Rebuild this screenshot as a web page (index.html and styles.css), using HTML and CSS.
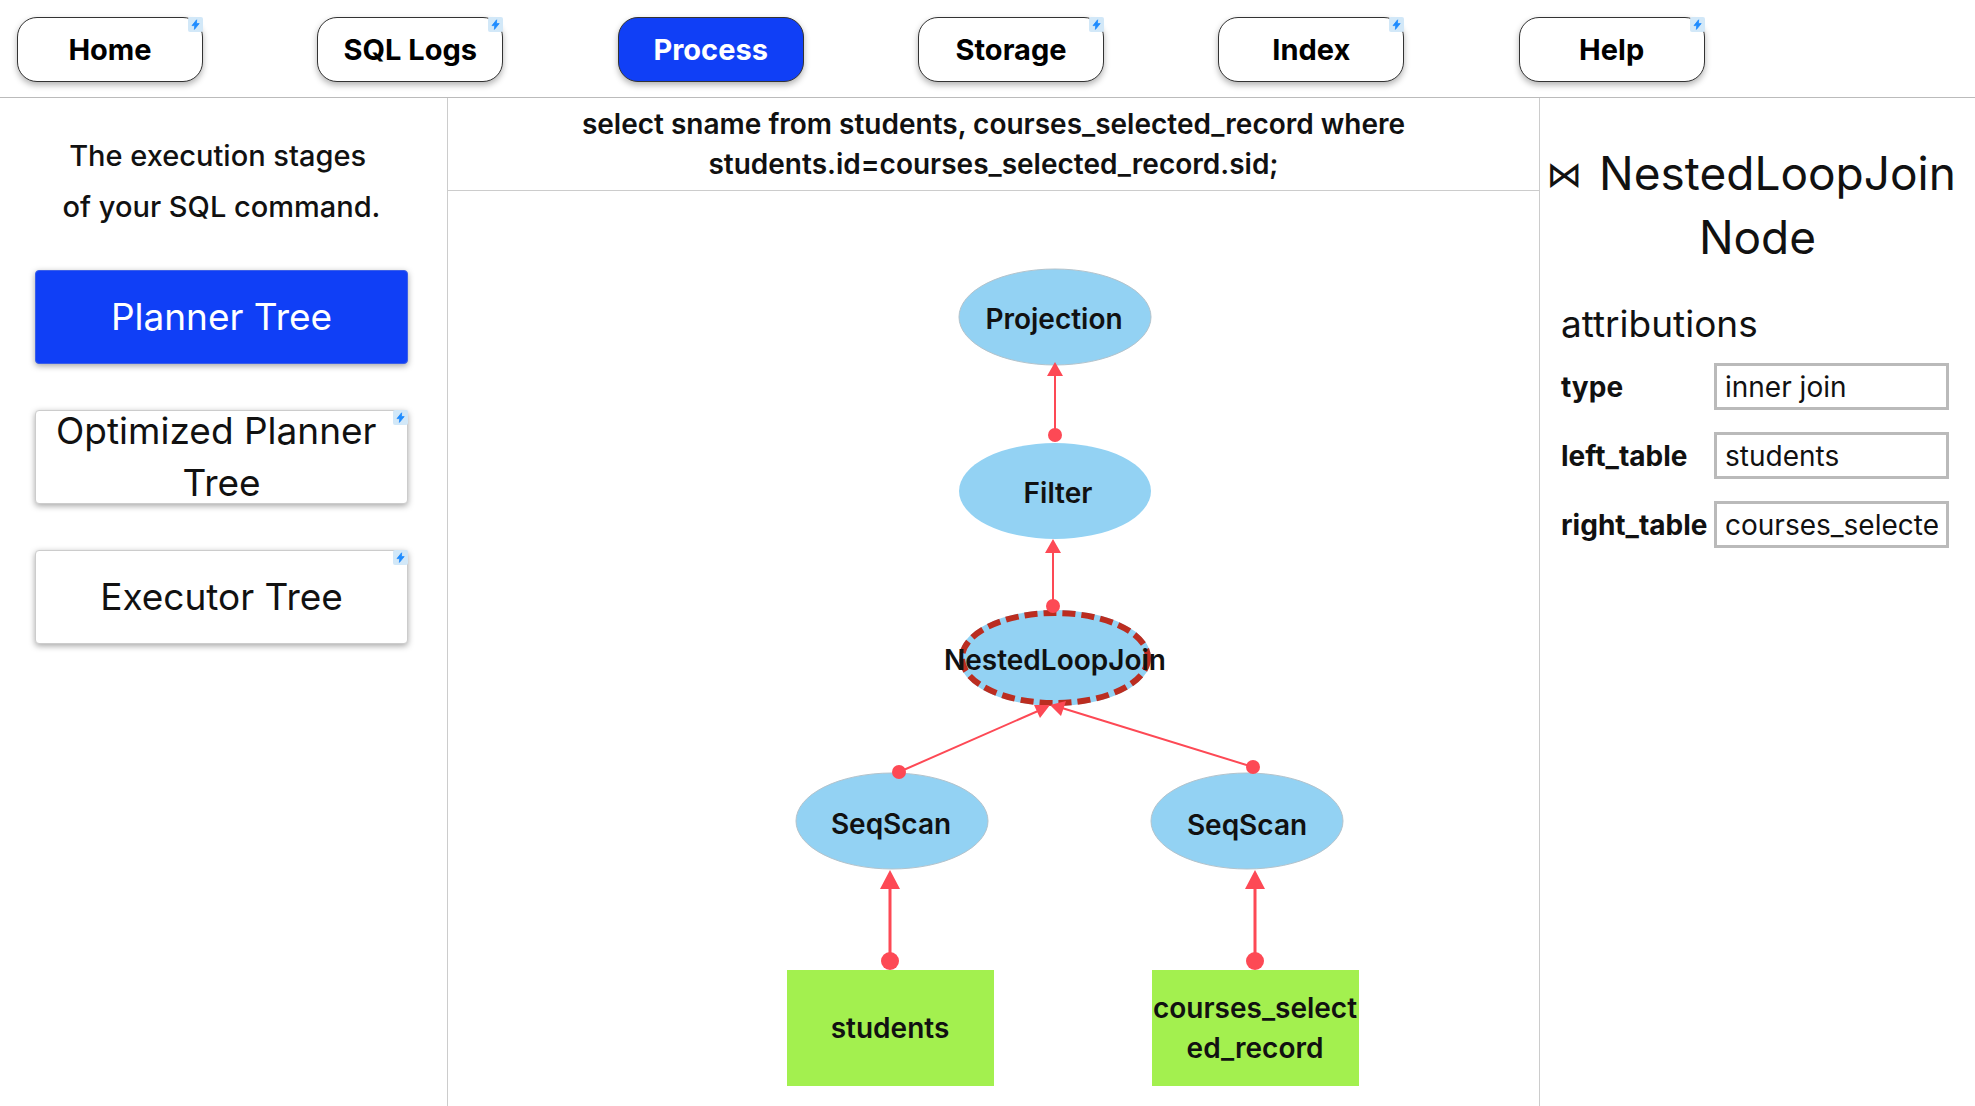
FILE: index.html
```html
<!DOCTYPE html>
<html lang="en">
<head>
<meta charset="utf-8">
<title>SQL Process</title>
<link rel="stylesheet" href="styles.css">
</head>
<body>
<svg class="defs" aria-hidden="true">
  <symbol id="bolt" viewBox="0 0 15 15"><path d="M8.6 2.8 4 8.6h2.7L6.4 12.4l4.8-5.8H8.5z" fill="#1e8cff" stroke="#1e8cff" stroke-width=".8"/></symbol>
</svg>
<nav class="nav">
  <button class="nav-btn">Home<svg class="badge"><use href="#bolt"/></svg></button>
  <button class="nav-btn">SQL Logs<svg class="badge"><use href="#bolt"/></svg></button>
  <button class="nav-btn active">Process</button>
  <button class="nav-btn">Storage<svg class="badge"><use href="#bolt"/></svg></button>
  <button class="nav-btn">Index<svg class="badge"><use href="#bolt"/></svg></button>
  <button class="nav-btn">Help<svg class="badge"><use href="#bolt"/></svg></button>
</nav>
<div class="layout">
  <aside class="stages">
    <p class="intro">The execution stages&nbsp;<br>of your SQL command.</p>
    <button class="stage active">Planner Tree</button>
    <button class="stage"><span>Optimized Planner&nbsp;<br>Tree</span><svg class="badge"><use href="#bolt"/></svg></button>
    <button class="stage">Executor Tree<svg class="badge"><use href="#bolt"/></svg></button>
  </aside>
  <main class="center">
    <p class="query">select sname from students, courses_selected_record where students.id=courses_selected_record.sid;</p>
    <svg class="tree" viewBox="448 191 1091 915" role="img" aria-label="Planner tree">
      <g class="node">
        <ellipse class="outlined" cx="1055" cy="317" rx="96" ry="48"/>
        <ellipse cx="1055" cy="491" rx="96" ry="48"/>
        <ellipse cx="1055" cy="658" rx="96" ry="48"/>
        <ellipse class="selected" cx="1055" cy="658" rx="93" ry="45"/>
        <ellipse class="outlined" cx="892" cy="821" rx="96" ry="48"/>
        <ellipse class="outlined" cx="1247" cy="821" rx="96" ry="48"/>
      </g>
      <g class="table">
        <rect x="787" y="970" width="207" height="116"/>
        <rect x="1152" y="970" width="207" height="116"/>
      </g>
      <g class="edge">
        <path d="M1055 434V374M1053 605V552M899 772 1038 711M1253 767 1062 708"/>
        <path class="thick" d="M890 960V886M1255 960V886"/>
        <circle cx="1055" cy="435" r="7"/>
        <circle cx="1053" cy="606" r="7"/>
        <circle cx="899" cy="772" r="7"/>
        <circle cx="1253" cy="767" r="7"/>
        <circle cx="890" cy="961" r="9"/>
        <circle cx="1255" cy="961" r="9"/>
        <path class="head" d="M1055 362l8 14h-16zM1053 539l8 14h-16zM1050 705 1034 705 1040 718zM1050 705 1066 701 1061 716zM890 870l10 19h-20zM1255 870l10 19h-20z"/>
      </g>
      <g class="label">
        <text x="1054" y="329">Projection</text>
        <text x="1058" y="503">Filter</text>
        <text x="1055" y="670">NestedLoopJoin</text>
        <text x="891" y="834">SeqScan</text>
        <text x="1247" y="835">SeqScan</text>
        <text x="890" y="1038">students</text>
        <text x="1255" y="1018">courses_select</text>
        <text x="1255" y="1058">ed_record</text>
      </g>
    </svg>
  </main>
  <aside class="details">
    <h1 class="title"><span class="join">⋈</span> NestedLoopJoin&nbsp;<br>Node</h1>
    <form class="attrs">
      <h2 class="subtitle">attributions</h2>
      <div class="field"><label for="type">type</label><input id="type" value="inner join"></div>
      <div class="field"><label for="left">left_table</label><input id="left" value="students"></div>
      <div class="field"><label for="right">right_table</label><input id="right" value="courses_selecte"></div>
    </form>
  </aside>
</div>
</body>
</html>
```
FILE: styles.css
```css
* { box-sizing: border-box; }
body {
  margin: 0;
  min-height: 100vh;
  display: flex;
  flex-direction: column;
  background: #fff;
  color: #111;
  font-family: Inter, "Liberation Sans", sans-serif;
  font-size: 28px;
  font-weight: 600;
}
button, input { font: inherit; color: inherit; }
h1, h2, p { margin: 0; font-weight: 400; }
.defs { position: absolute; width: 0; height: 0; }

.nav {
  display: grid;
  grid-template-columns: repeat(6, minmax(0, 1fr));
  padding: 17px 156px 15px 17px;
  border-bottom: 1px solid #bbb;
}
.nav-btn {
  position: relative;
  width: 186px;
  height: 65px;
  padding: 0;
  border: 1px solid #333;
  border-radius: 20px;
  background: #fff;
  color: #000;
  font-size: 29px;
  font-weight: 700;
  box-shadow: 0 3px 6px rgba(0, 0, 0, .3);
}
.nav-btn.active { background: #103ff6; color: #fff; }
.badge {
  position: absolute;
  top: -1px;
  right: -1px;
  width: 15px;
  height: 15px;
  border-radius: 2px;
  background: #d2e8f8;
}

.layout {
  flex: 1;
  display: grid;
  grid-template-columns: 448px minmax(0, 1fr) 436px;
}
.stages {
  display: flex;
  flex-direction: column;
  gap: 46px;
  padding: 32px 39px 32px 35px;
  border-right: 1px solid #ccc;
}
.intro {
  margin-bottom: -8px;
  font-size: 29px;
  line-height: 51px;
  text-align: center;
  font-weight: 500;
}
.stage {
  position: relative;
  display: flex;
  align-items: center;
  justify-content: center;
  height: 94px;
  padding: 0 16px;
  border: 1px solid #ccc;
  border-radius: 4px;
  background: #fff;
  font-size: 37px;
  font-weight: 400;
  line-height: 52px;
  box-shadow: 0 2px 6px rgba(0, 0, 0, .35);
}
.stage.active { border-color: #3b5fe8; background: #103ff6; color: #fff; }

.query {
  padding: 6px 120px;
  border-bottom: 1px solid #ccc;
  line-height: 40px;
  text-align: center;
  font-weight: 600;
}
.tree { display: block; width: 100%; }
.node { fill: #93d2f3; }
.outlined { stroke: #b3c3cc; stroke-width: 1; }
.selected { stroke: #bb2d20; stroke-width: 6; stroke-dasharray: 13 6; }
.table { fill: #a3f04f; }
.edge { fill: #fd4955; stroke: none; }
.edge path { stroke: #fd4955; stroke-width: 2; }
.edge .thick { stroke-width: 3; }
.edge .head { stroke: none; }
.label { fill: #111; text-anchor: middle; }

.details { border-left: 1px solid #ccc; padding-top: 43px; }
.title {
  font-size: 46px;
  line-height: 64px;
  text-align: center;
}
.join {
  margin-right: 4px;
  font-family: "DejaVu Sans", sans-serif;
  font-size: 36px;
  line-height: 1;
  vertical-align: 3px;
}
.attrs { padding: 23px 26px 24px 21px; }
.subtitle { font-size: 37px; line-height: 64px; margin-bottom: 7px; }
.field {
  display: flex;
  align-items: center;
  justify-content: space-between;
  margin-bottom: 22px;
}
.field label { font-weight: 700; }
.field input {
  width: 235px;
  height: 47px;
  padding: 0 8px;
  border: 3px solid #bababa;
  background: #fff;
  font-weight: 400;
}
```
